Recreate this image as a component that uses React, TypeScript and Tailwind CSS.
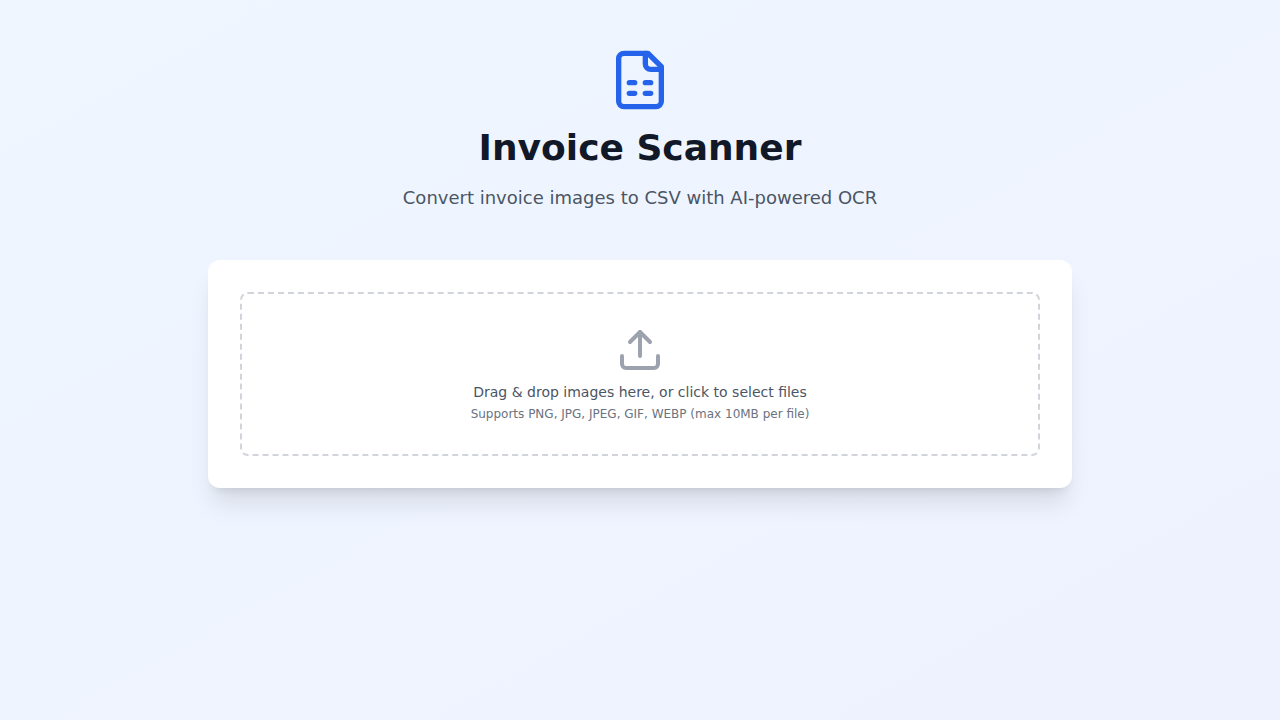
import { useRef, useState } from "react";
import type { ChangeEvent, DragEvent } from "react";
import { Upload } from "lucide-react";

function SheetIcon() {
  return (
    <svg
      className="h-16 w-16 text-[#2563eb]"
      viewBox="0 0 24 24"
      fill="none"
      stroke="currentColor"
      strokeWidth="2"
      strokeLinecap="round"
      strokeLinejoin="round"
      aria-hidden="true"
    >
      <path d="M15 2H6a2 2 0 0 0-2 2v16a2 2 0 0 0 2 2h12a2 2 0 0 0 2-2V7Z" />
      <path d="M14 2v4a2 2 0 0 0 2 2h4" />
      <path d="M8 13h2" />
      <path d="M14 13h2" />
      <path d="M8 17h2" />
      <path d="M14 17h2" />
    </svg>
  );
}

function Dropzone({ onFiles }: { onFiles: (files: File[]) => void }) {
  const input = useRef<HTMLInputElement>(null);

  const handleDrop = (event: DragEvent) => {
    event.preventDefault();
    onFiles(Array.from(event.dataTransfer.files));
  };

  const handleChange = (event: ChangeEvent<HTMLInputElement>) => {
    onFiles(Array.from(event.target.files ?? []));
  };

  return (
    <>
      <button
        type="button"
        onClick={() => input.current?.click()}
        onDragOver={(event) => event.preventDefault()}
        onDrop={handleDrop}
        className="block w-full cursor-pointer rounded-lg border-2 border-dashed border-[#d1d5db] p-8 text-center hover:border-[#9ca3af]"
      >
        <Upload className="mx-auto h-12 w-12 text-[#9ca3af]" aria-hidden="true" />
        <span className="mt-2 block text-sm text-[#4b5563]">
          Drag &amp; drop images here, or click to select files
        </span>
        <span className="mt-1 block text-xs text-[#6b7280]">
          Supports PNG, JPG, JPEG, GIF, WEBP (max 10MB per file)
        </span>
      </button>
      <input
        ref={input}
        type="file"
        accept="image/*"
        multiple
        hidden
        aria-label="Invoice images"
        onChange={handleChange}
      />
    </>
  );
}

export default function App() {
  const [files, setFiles] = useState<File[]>([]);

  return (
    <div className="min-h-screen bg-[linear-gradient(to_bottom_right,#eff6ff,#eef2ff)] px-4 py-12 font-['DejaVu_Sans',sans-serif]">
      <main className="mx-auto max-w-4xl px-4">
        <header className="mb-12 text-center">
          <div className="mb-4 flex justify-center">
            <SheetIcon />
          </div>
          <h1 className="mb-4 text-4xl font-bold text-[#111827]">Invoice Scanner</h1>
          <p className="text-lg text-[#4b5563]">
            Convert invoice images to CSV with AI-powered OCR
          </p>
        </header>
        <section className="rounded-xl bg-white p-8 shadow-xl">
          <Dropzone onFiles={(added) => setFiles([...files, ...added])} />
          {files.length > 0 && (
            <ul className="mt-4 space-y-2 text-sm text-[#4b5563]">
              {files.map((file, index) => (
                <li key={index}>{file.name}</li>
              ))}
            </ul>
          )}
        </section>
      </main>
    </div>
  );
}
